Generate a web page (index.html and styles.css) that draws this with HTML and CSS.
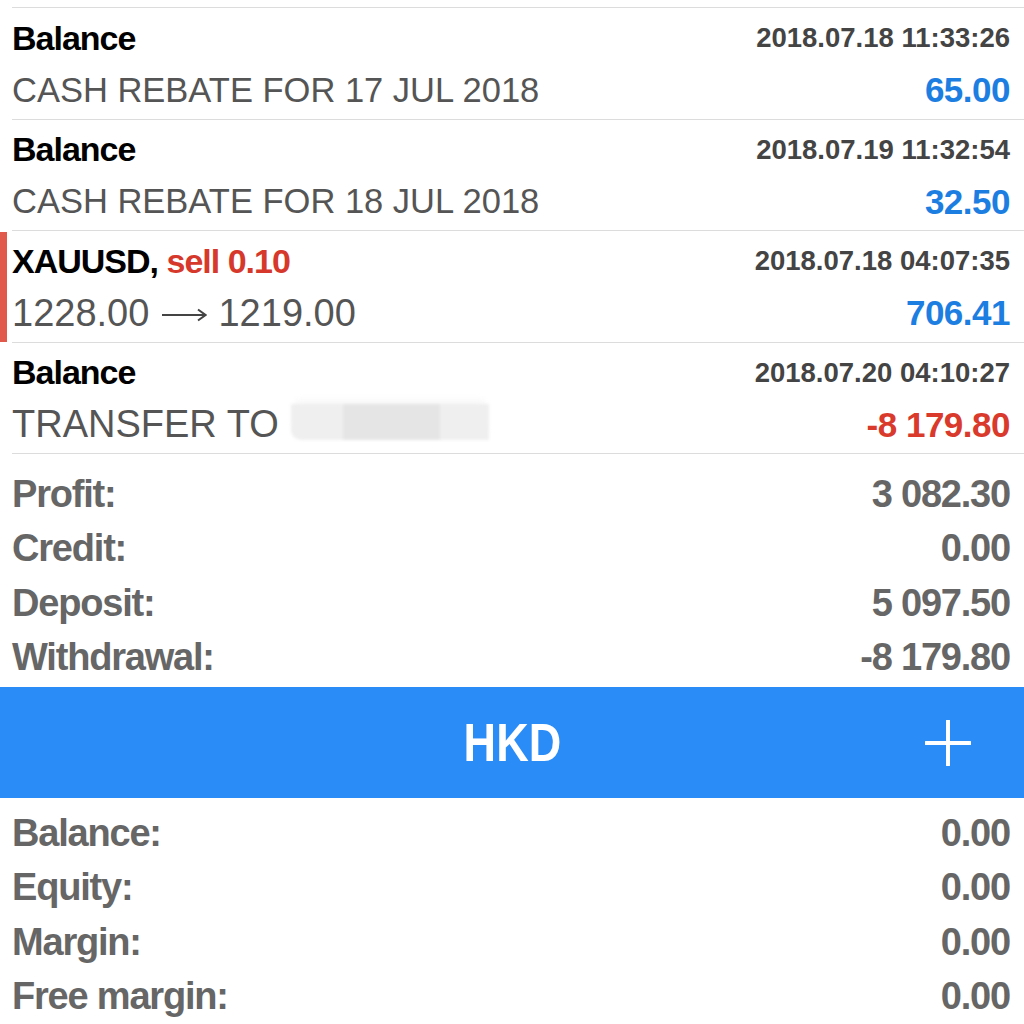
FILE: index.html
```html
<!DOCTYPE html>
<html lang="en">
<head>
  <meta charset="UTF-8">
  <meta name="viewport" content="width=device-width, initial-scale=1.0">
  <title>History</title>
  <link rel="stylesheet" href="styles.css">
</head>
<body>
  <div class="history">
    <div class="deal">
      <div class="deal-body">
        <div class="deal-line">
          <span class="deal-title">Balance</span>
          <span class="deal-time">2018.07.18 11:33:26</span>
        </div>
        <div class="deal-line">
          <span class="deal-desc">CASH REBATE FOR 17 JUL 2018</span>
          <span class="amount">65.00</span>
        </div>
      </div>
    </div>
    <div class="deal">
      <div class="deal-body">
        <div class="deal-line">
          <span class="deal-title">Balance</span>
          <span class="deal-time">2018.07.19 11:32:54</span>
        </div>
        <div class="deal-line">
          <span class="deal-desc">CASH REBATE FOR 18 JUL 2018</span>
          <span class="amount">32.50</span>
        </div>
      </div>
    </div>
    <div class="deal sell">
      <div class="deal-body">
        <div class="deal-line">
          <span class="deal-title">XAUUSD, <span class="deal-type">sell 0.10</span></span>
          <span class="deal-time">2018.07.18 04:07:35</span>
        </div>
        <div class="deal-line">
          <span class="deal-desc large">1228.00
            <svg class="arrow" width="46" height="14" viewBox="0 0 46 14">
              <path d="M1 7H44M37 1.5L44.5 7L37 12.5" stroke="#444" stroke-width="2" fill="none"/>
            </svg>
            1219.00</span>
          <span class="amount">706.41</span>
        </div>
      </div>
    </div>
    <div class="deal">
      <div class="deal-body">
        <div class="deal-line">
          <span class="deal-title">Balance</span>
          <span class="deal-time">2018.07.20 04:10:27</span>
        </div>
        <div class="deal-line">
          <span class="deal-desc large">TRANSFER TO <span class="hidden-name"><i></i><i></i><i></i></span></span>
          <span class="amount negative">-8 179.80</span>
        </div>
      </div>
    </div>
  </div>

  <div class="summary">
    <div class="summary-row"><span>Profit:</span><span>3 082.30</span></div>
    <div class="summary-row"><span>Credit:</span><span>0.00</span></div>
    <div class="summary-row"><span>Deposit:</span><span>5 097.50</span></div>
    <div class="summary-row"><span>Withdrawal:</span><span>-8 179.80</span></div>
  </div>

  <div class="currency-bar">
    <span></span>
    <span class="currency-name">HKD</span>
    <span class="currency-add">
      <svg width="46" height="46" viewBox="0 0 46 46">
        <path d="M23 1V45M1 23H45" stroke="#fff" stroke-width="4" stroke-linecap="round" fill="none"/>
      </svg>
    </span>
  </div>

  <div class="summary account">
    <div class="summary-row"><span>Balance:</span><span>0.00</span></div>
    <div class="summary-row"><span>Equity:</span><span>0.00</span></div>
    <div class="summary-row"><span>Margin:</span><span>0.00</span></div>
    <div class="summary-row"><span>Free margin:</span><span>0.00</span></div>
  </div>
</body>
</html>
```

FILE: styles.css
```css
body {
  font-family: "Liberation Sans", Arial, sans-serif;
  margin: 0;
  padding: 0;
  background-color: #fff;
  color: #000;
  overflow: hidden;
}

.history {
  padding-top: 7px;
}

.deal {
  padding-left: 12px;
}

.deal:first-child .deal-body {
  border-top: 1px solid #dcdcdc;
}

.deal-body {
  border-bottom: 1px solid #dcdcdc;
  padding: 4px 14px 2.5px 0;
}

.deal.sell {
  background: linear-gradient(#e0594b, #e0594b) no-repeat 0 1px / 7px calc(100% - 2px);
}

.deal-line {
  display: flex;
  justify-content: space-between;
  align-items: center;
  height: 52px;
  white-space: nowrap;
}

.deal-title {
  font-size: 34px;
  font-weight: bold;
  letter-spacing: -1px;
}

.deal-type {
  color: #d6392b;
}

.deal-time {
  font-size: 27.5px;
  font-weight: bold;
  color: #444;
}

.deal-desc {
  font-size: 34.5px;
  color: #555;
}

.deal-desc.large {
  font-size: 38px;
}

.arrow {
  vertical-align: 4px;
  margin: 0 1px;
}

.amount {
  font-size: 35px;
  font-weight: bold;
  letter-spacing: -0.5px;
  color: #1d7ee2;
}

.amount.negative {
  color: #d93a2c;
}

.hidden-name {
  display: inline-flex;
  vertical-align: -3px;
  height: 36px;
  margin-left: 2px;
  filter: blur(1.5px);
  box-shadow: 0 -9px 6px -4px #f9f9f9;
}

.hidden-name i {
  display: block;
  height: 100%;
  background-color: #efefef;
}

.hidden-name i:nth-child(1) {
  width: 52px;
  border-bottom-left-radius: 10px;
}

.hidden-name i:nth-child(2) {
  width: 97px;
  background-color: #e5e5e5;
}

.hidden-name i:nth-child(3) {
  width: 49px;
}

.summary {
  padding: 13px 14px 2px 12px;
}

.summary-row {
  display: flex;
  justify-content: space-between;
  align-items: center;
  height: 54.5px;
  font-size: 38px;
  font-weight: bold;
  letter-spacing: -1.2px;
  color: #666;
}

.currency-bar {
  display: grid;
  grid-template-columns: 1fr auto 1fr;
  align-items: center;
  height: 111px;
  background-color: #2a8cf6;
  color: #fff;
}

.currency-name {
  display: inline-block;
  font-size: 53px;
  font-weight: bold;
  transform: scaleX(0.85);
}

.currency-add {
  justify-self: end;
  display: flex;
  padding-right: 53px;
}

.summary.account {
  padding-top: 8px;
}
```
